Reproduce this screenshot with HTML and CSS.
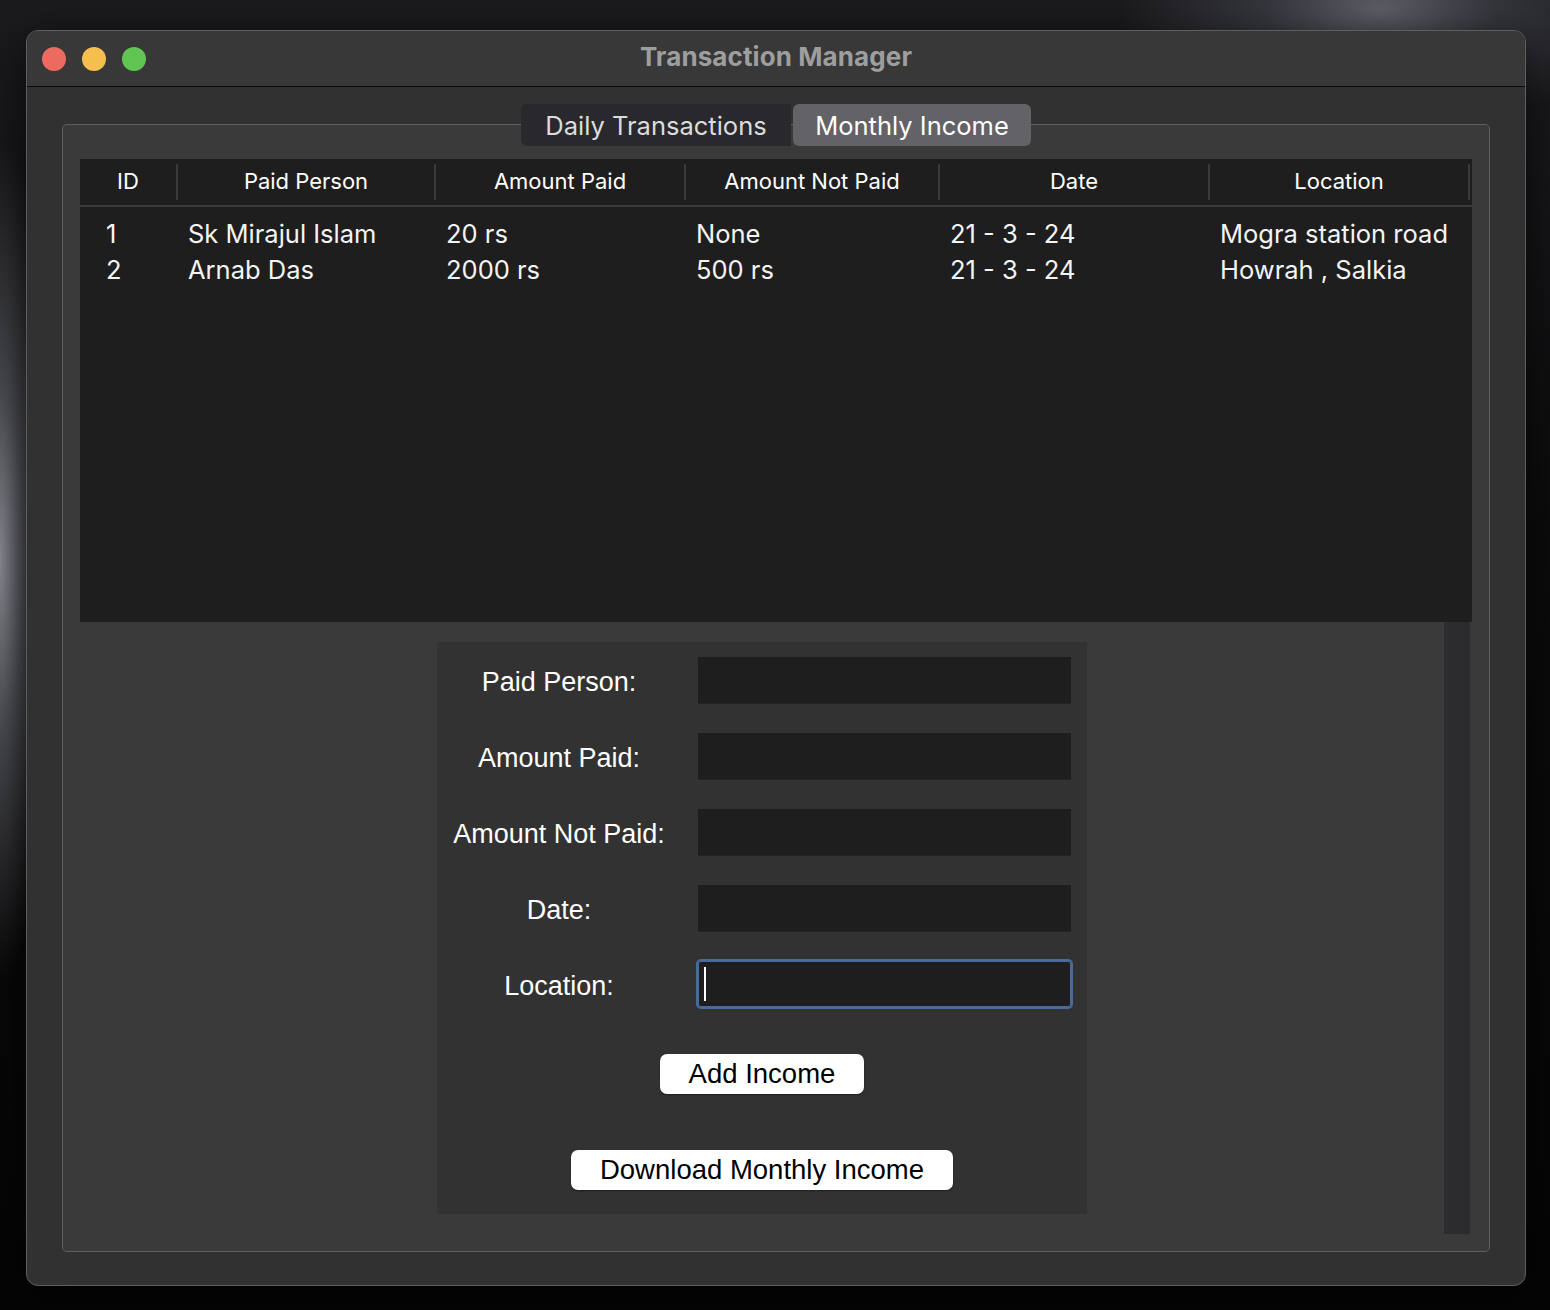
FILE: index.html
```html
<!DOCTYPE html>
<html>
<head>
<meta charset="utf-8">
<title>Transaction Manager</title>
<link rel="stylesheet" href="styles.css">
</head>
<body>
<div class="desktop">
  <div class="window">
    <div class="titlebar">
      <div class="lights">
        <span class="light red"></span>
        <span class="light yellow"></span>
        <span class="light green"></span>
      </div>
      <div class="title">Transaction Manager</div>
      <div class="spacer"></div>
    </div>
    <div class="content">
      <div class="tabs">
        <div class="tab">Daily Transactions</div>
        <div class="tab active">Monthly Income</div>
      </div>
      <div class="group">
        <div class="table">
          <div class="thead">
            <div class="th">ID</div>
            <div class="th">Paid Person</div>
            <div class="th">Amount Paid</div>
            <div class="th">Amount Not Paid</div>
            <div class="th">Date</div>
            <div class="th">Location</div>
          </div>
          <div class="tbody">
            <div class="tr">
              <div class="td id">1</div>
              <div class="td">Sk Mirajul Islam</div>
              <div class="td">20 rs</div>
              <div class="td">None</div>
              <div class="td">21 - 3 - 24</div>
              <div class="td">Mogra station road</div>
            </div>
            <div class="tr">
              <div class="td id">2</div>
              <div class="td">Arnab Das</div>
              <div class="td">2000 rs</div>
              <div class="td">500 rs</div>
              <div class="td">21 - 3 - 24</div>
              <div class="td">Howrah , Salkia</div>
            </div>
          </div>
        </div>
        <div class="lower">
          <div class="form-area">
            <div class="form">
              <div class="fields">
                <label class="label">Paid Person:</label>
                <div class="input"></div>
                <label class="label">Amount Paid:</label>
                <div class="input"></div>
                <label class="label">Amount Not Paid:</label>
                <div class="input"></div>
                <label class="label">Date:</label>
                <div class="input"></div>
                <label class="label">Location:</label>
                <div class="input focused"><span class="caret"></span></div>
              </div>
              <button class="btn add">Add Income</button>
              <button class="btn download">Download Monthly Income</button>
            </div>
          </div>
          <div class="scrolltrack"></div>
        </div>
      </div>
    </div>
  </div>
</div>
</body>
</html>
```

FILE: styles.css
```css
* { box-sizing: border-box; }

html, body {
  margin: 0;
  padding: 0;
}

body {
  width: 1550px;
  height: 1310px;
  overflow: hidden;
  font-family: Inter, "Liberation Sans", sans-serif;
  background:
    radial-gradient(ellipse 260px 120px at 1380px 10px, #5d5e66 0%, #34353b 45%, rgba(20,20,22,0) 100%),
    radial-gradient(ellipse 60px 420px at 0px 560px, #8a8b92 0%, #4a4b50 40%, rgba(10,10,10,0) 100%),
    linear-gradient(180deg, #1b1b1e 0%, #0b0b0c 40%, #050505 100%);
}

.desktop {
  padding: 30px 0 0 26px;
}

.window {
  width: 1500px;
  height: 1256px;
  border: 1px solid #5e5e5e;
  border-radius: 12px;
  background: #313131;
  overflow: hidden;
  box-shadow: 0 10px 40px rgba(0,0,0,0.6);
}

/* title bar */
.titlebar {
  height: 56px;
  background: #373837;
  border-bottom: 1px solid #0c0c0c;
  display: grid;
  grid-template-columns: 1fr auto 1fr;
  align-items: center;
}

.lights {
  display: flex;
  gap: 16px;
  padding-left: 15px;
  padding-top: 1px;
}

.light {
  width: 24px;
  height: 24px;
  border-radius: 50%;
  display: block;
}
.light.red { background: #ed6a5e; }
.light.yellow { background: #f4bf4f; }
.light.green { background: #61c554; }

.title {
  font-family: Inter, "Liberation Sans", sans-serif;
  font-weight: 700;
  font-size: 26px;
  color: #9e9e9e;
  letter-spacing: 0.1px;
  padding-bottom: 4px;
}

/* content */
.content {
  padding: 17px 35px 33px 35px;
}

.tabs {
  display: flex;
  justify-content: center;
  gap: 2px;
  height: 42px;
  position: relative;
  z-index: 1;
}

.tab {
  height: 42px;
  display: flex;
  align-items: center;
  justify-content: center;
  font-size: 25.5px;
  color: #dcdcdc;
}

.tab:first-child {
  width: 270px;
  background: #29292d;
  border-radius: 6px 0 0 6px;
}

.tab.active {
  width: 238px;
  background: #636267;
  color: #ffffff;
  border-radius: 6px;
}

.group {
  margin-top: -22px;
  height: 1128px;
  border: 1px solid #606060;
  border-radius: 5px;
  background: #3a3a3a;
  padding: 34px 17px 17px 17px;
}

/* table */
.table {
  height: 463px;
  background: #1e1e1e;
  display: flex;
  flex-direction: column;
}

.thead {
  display: grid;
  grid-template-columns: 98px 258px 250px 254px 270px 262px;
  padding: 5px 0 5px 0;
  border-bottom: 2px solid #3a3a3a;
}

.th {
  height: 36px;
  border-right: 2px solid #3a3a3a;
  display: flex;
  align-items: center;
  justify-content: center;
  font-size: 22px;
  color: #ffffff;
  padding-bottom: 3px;
}

.th:last-child {
  margin-right: 2px;
}

.tbody {
  padding-top: 8px;
}

.tr {
  display: grid;
  grid-template-columns: 98px 258px 250px 254px 270px 262px;
  height: 36px;
  align-items: center;
}

.td {
  padding-left: 10px;
  font-size: 25.5px;
  color: #f4f4f4;
  white-space: nowrap;
}

.td.id {
  padding-left: 26px;
}

/* lower area */
.lower {
  height: 612px;
  display: flex;
}

.form-area {
  flex: 1;
  display: flex;
  justify-content: center;
  padding-top: 20px;
}

.scrolltrack {
  width: 26px;
  margin-right: 2px;
  background: #2c2c2e;
}

.form {
  width: 650px;
  height: 572px;
  background: #323232;
  padding: 15px 16px 24px 0;
  display: flex;
  flex-direction: column;
  align-items: center;
}

.fields {
  display: grid;
  grid-template-columns: 244px 373px;
  column-gap: 17px;
  row-gap: 30px;
  align-self: stretch;
}

.label {
  height: 46px;
  display: flex;
  align-items: center;
  justify-content: center;
  font-family: "Liberation Sans", Arial, sans-serif;
  font-size: 27px;
  color: #ffffff;
  padding-top: 5px;
}

.input {
  height: 46px;
  background: #1e1e1e;
  box-shadow: 0 1px 0 rgba(0,0,0,0.25);
}

.input.focused {
  border-radius: 3px;
  box-shadow: 0 0 0 2px #4a6a9e, inset 0 0 0 1px #4a6a9e;
  display: flex;
  align-items: center;
  padding-left: 6px;
}

.caret {
  display: block;
  width: 2px;
  height: 34px;
  background: #ffffff;
}

.btn {
  height: 40px;
  padding: 0 29px;
  background: #ffffff;
  color: #000000;
  border: none;
  border-radius: 7px;
  font-family: "Liberation Sans", Arial, sans-serif;
  font-size: 27.5px;
  box-shadow: 0 1px 2px rgba(0,0,0,0.4);
  line-height: 40px;
}

.btn.add {
  margin-top: 47px;
  margin-left: 16px;
}

.btn.download {
  margin-top: 56px;
  margin-left: 16px;
}
```
